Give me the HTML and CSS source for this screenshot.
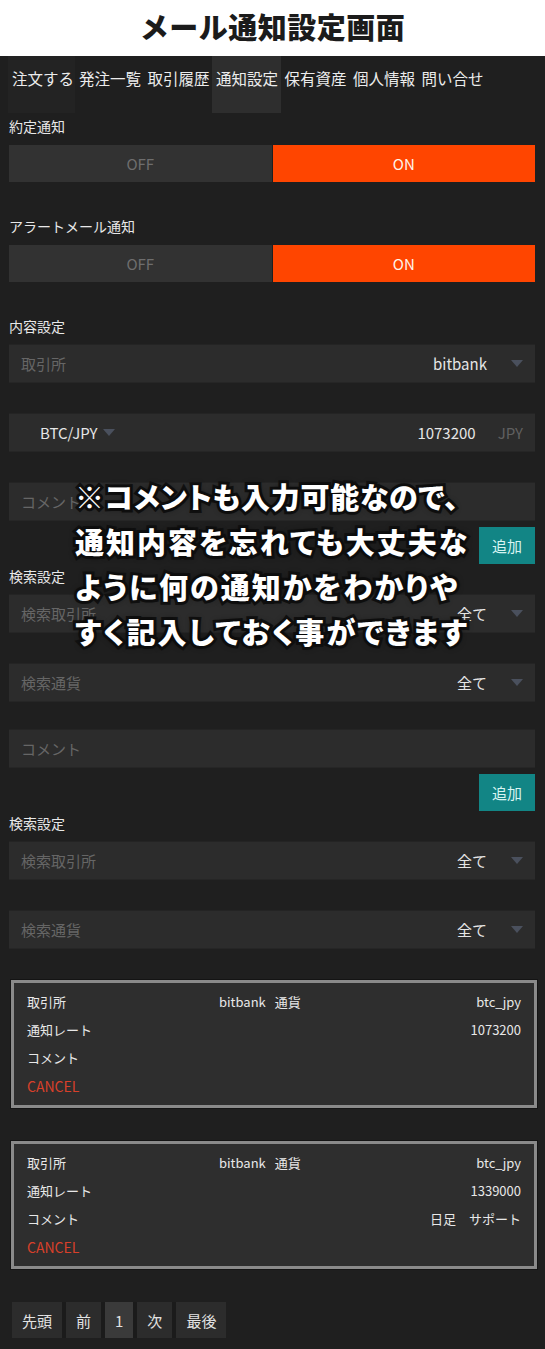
FILE: index.html
```html
<!DOCTYPE html>
<html lang="ja">
<head>
    <meta charset="UTF-8">
    <meta name="viewport" content="width=device-width, initial-scale=1.0">
    <title>メール通知設定画面</title>
    <link rel="stylesheet" href="styles.css">
</head>
<body>
<header class="title-bar">
    <h1>メール通知設定画面</h1>
</header>

<nav class="tabs">
    <span class="tab tab-first">注文する</span>
    <span class="tab">発注一覧</span>
    <span class="tab">取引履歴</span>
    <span class="tab active">通知設定</span>
    <span class="tab">保有資産</span>
    <span class="tab">個人情報</span>
    <span class="tab">問い合せ</span>
</nav>

<main class="content">
    <div class="label">約定通知</div>
    <div class="toggle">
        <span class="off">OFF</span>
        <span class="on">ON</span>
    </div>

    <div class="label">アラートメール通知</div>
    <div class="toggle">
        <span class="off">OFF</span>
        <span class="on">ON</span>
    </div>

    <div class="label">内容設定</div>
    <div class="field">
        <span class="placeholder">取引所</span>
        <span class="value">bitbank</span>
        <span class="caret"></span>
    </div>
    <div class="field">
        <span class="pair">BTC/JPY</span>
        <span class="caret caret-pair"></span>
        <span class="value">1073200</span>
        <span class="unit">JPY</span>
    </div>
    <div class="field field-comment">
        <span class="placeholder">コメント</span>
    </div>
    <div class="actions"><button class="add-btn">追加</button></div>

    <div class="label label-after-btn">検索設定</div>
    <div class="field">
        <span class="placeholder">検索取引所</span>
        <span class="value">全て</span>
        <span class="caret"></span>
    </div>
    <div class="field field-short">
        <span class="placeholder">検索通貨</span>
        <span class="value">全て</span>
        <span class="caret"></span>
    </div>

    <div class="field field-comment">
        <span class="placeholder">コメント</span>
    </div>
    <div class="actions"><button class="add-btn">追加</button></div>

    <div class="label label-after-btn">検索設定</div>
    <div class="field">
        <span class="placeholder">検索取引所</span>
        <span class="value">全て</span>
        <span class="caret"></span>
    </div>
    <div class="field">
        <span class="placeholder">検索通貨</span>
        <span class="value">全て</span>
        <span class="caret"></span>
    </div>

    <!-- 登録済みの通知 -->
    <div class="card">
        <div class="row">
            <span class="row-label">取引所</span>
            <span>bitbank</span>
            <span class="sub-label">通貨</span>
            <span class="row-value">btc_jpy</span>
        </div>
        <div class="row">
            <span class="row-label">通知レート</span>
            <span class="row-value">1073200</span>
        </div>
        <div class="row">
            <span class="row-label">コメント</span>
        </div>
        <div class="row"><span class="cancel">CANCEL</span></div>
    </div>

    <div class="card">
        <div class="row">
            <span class="row-label">取引所</span>
            <span>bitbank</span>
            <span class="sub-label">通貨</span>
            <span class="row-value">btc_jpy</span>
        </div>
        <div class="row">
            <span class="row-label">通知レート</span>
            <span class="row-value">1339000</span>
        </div>
        <div class="row">
            <span class="row-label">コメント</span>
            <span class="row-value">日足　サポート</span>
        </div>
        <div class="row"><span class="cancel">CANCEL</span></div>
    </div>

    <div class="pager">
        <span class="page-btn">先頭</span>
        <span class="page-btn">前</span>
        <span class="page-btn current">1</span>
        <span class="page-btn">次</span>
        <span class="page-btn">最後</span>
    </div>
</main>

<p class="note">
    <span class="note-line tight">※コメントも入力可能なので、</span>
    <span class="note-line">通知内容を忘れても大丈夫な</span>
    <span class="note-line">ように何の通知かをわかりや</span>
    <span class="note-line">すく記入しておく事ができます</span>
</p>
</body>
</html>
```

FILE: styles.css
```css
body {
  font-family: "Noto Sans CJK JP", sans-serif;
  margin: 0;
  padding: 0;
  background-color: #1f1f1f;
  color: #e8e8e8;
  position: relative;
  min-height: 1349px;
}

/* Title */
.title-bar {
  background-color: #ffffff;
  height: 56px;
  display: flex;
  align-items: center;
  justify-content: center;
}

.title-bar h1 {
  margin: 0;
  font-size: 29px;
  font-weight: 900;
  color: #1b1b1b;
  letter-spacing: 0.5px;
  padding-bottom: 4px;
}

/* Tabs */
.tabs {
  display: flex;
  height: 57px;
  padding-left: 8px;
}

.tab {
  width: 68.5px;
  box-sizing: border-box;
  padding: 10px 0 0 4px;
  font-size: 15.5px;
  line-height: 24px;
  white-space: nowrap;
  color: #ececec;
}

.tab-first {
  background-color: #232323;
  width: 67px;
}

.tab.active {
  background-color: #2e2e2e;
}

/* Form */
.content {
  padding: 3px 10px 0 9px;
}

.label {
  font-size: 14px;
  line-height: 20px;
  margin-bottom: 9px;
}

.label-after-btn {
  margin-top: 2px;
}

.toggle {
  display: flex;
  gap: 1px;
  height: 37px;
  margin-bottom: 34px;
  font-size: 15px;
}

.toggle span {
  flex: 1;
  display: flex;
  align-items: center;
  justify-content: center;
}

.toggle .off {
  background-color: #323232;
  color: #6e6e6e;
}

.toggle .on {
  background-color: #ff4500;
  color: #fff4ea;
}

.field {
  display: flex;
  align-items: center;
  height: 37px;
  margin-bottom: 32px;
  padding: 0 12px;
  background-color: #2c2c2c;
  box-shadow: 0 1px 0 #262626, 0 -1px 0 #242424;
  font-size: 15px;
}

.field-short {
  margin-bottom: 29px;
}

.field-comment {
  margin-bottom: 7px;
}

.placeholder {
  color: #666666;
  flex: 1;
}

.value {
  color: #e6e6e6;
}

.caret {
  width: 0;
  height: 0;
  margin-left: 24px;
  border-left: 6px solid transparent;
  border-right: 6px solid transparent;
  border-top: 7px solid #4a505d;
}

.pair {
  padding-left: 19px;
  color: #e6e6e6;
}

.caret-pair {
  margin-left: 6px;
  margin-right: auto;
}

.unit {
  margin-left: 22px;
  color: #606060;
}

.actions {
  display: flex;
  justify-content: flex-end;
}

.add-btn {
  width: 56px;
  height: 37px;
  border: none;
  background-color: #128585;
  color: #d8f4f2;
  font-family: inherit;
  font-size: 15px;
  padding: 0;
}

/* Registered notifications */
.card {
  margin-bottom: 33px;
  margin-left: 2px;
  margin-right: -2px;
  padding: 5px 13px;
  background-color: #2e2e2e;
  border: 3px solid #8a8a8a;
  box-shadow: 0 0 0 1px #141414;
  font-size: 13px;
}

.row {
  display: flex;
  line-height: 28px;
}

.row-label {
  width: 192px;
}

.sub-label {
  margin-left: 9px;
}

.row-value {
  margin-left: auto;
}

.cancel {
  color: #d8402a;
  font-size: 14px;
}

/* Paging */
.pager {
  display: inline-flex;
  gap: 4px;
  margin-left: 3px;
  padding: 0;
  background-color: #1b1b1b;
}

.page-btn {
  height: 36px;
  padding: 0 10px;
  display: flex;
  align-items: center;
  background-color: #2c2c2c;
  font-size: 15px;
  color: #e2e2e2;
}

.page-btn.current {
  background-color: #3a3a3a;
}

/* Annotation over the screenshot */
.note {
  position: absolute;
  left: 75px;
  top: 474px;
  margin: 0;
  font-size: 29px;
  font-weight: 900;
  line-height: 45px;
  letter-spacing: 2px;
  font-feature-settings: "palt";
  color: #ffffff;
  -webkit-text-stroke: 6px #111111;
  paint-order: stroke fill;
  text-shadow: 0 0 6px rgba(0, 0, 0, 0.8);
  white-space: nowrap;
}

.note-line {
  display: block;
}

.note-line.tight {
  letter-spacing: 0.7px;
}
```
